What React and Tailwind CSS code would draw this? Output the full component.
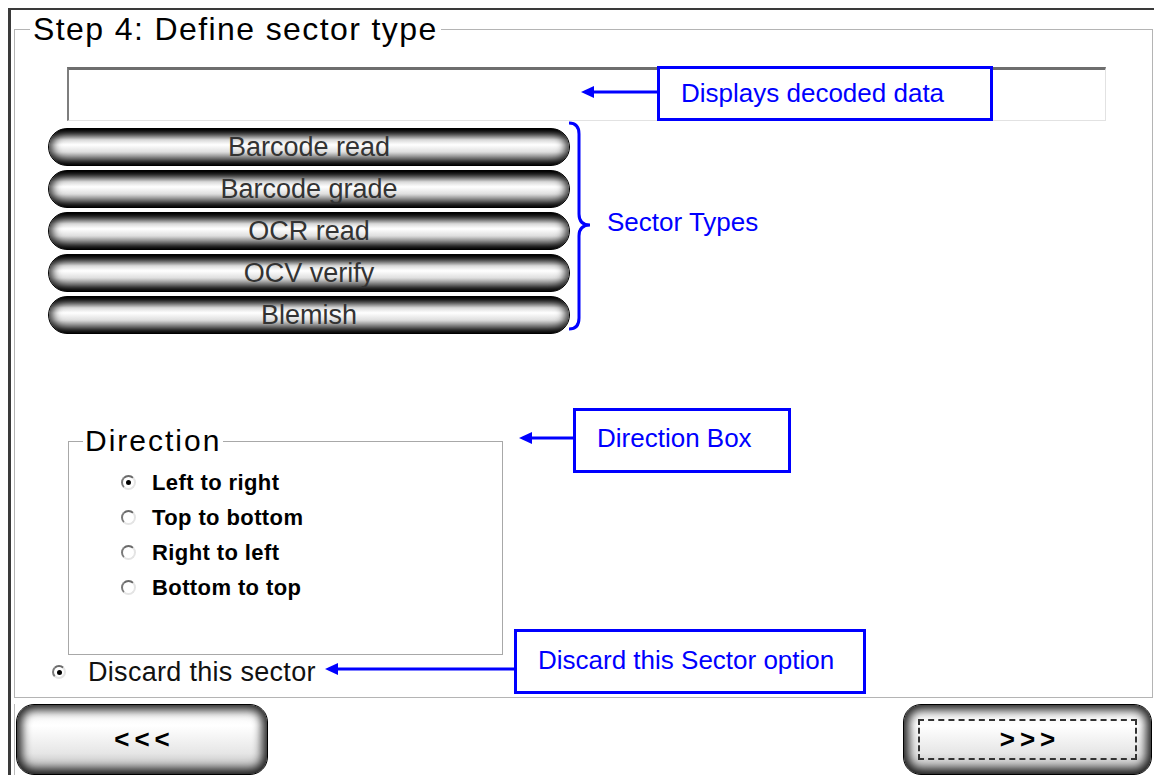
import React, { useState } from 'react';

const sectorTypes = ['Barcode read', 'Barcode grade', 'OCR read', 'OCV verify', 'Blemish'];
const directions = ['Left to right', 'Top to bottom', 'Right to left', 'Bottom to top'];

const Radio = ({ checked, size = 'w-[15px] h-[15px]' }) => (
  <span className={`${size} rounded-full bg-white border-2 border-t-[#6a6a6a] border-l-[#7a7a7a] border-r-[#e4e4e4] border-b-[#e4e4e4] flex items-center justify-center shrink-0`}>
    {checked && <span className="w-[5px] h-[5px] rounded-full bg-black" />}
  </span>
);

const Pill = ({ label }) => (
  <button className="w-[522px] h-[38px] rounded-full border border-black bg-[linear-gradient(to_bottom,#000_0%,#555_12%,#dcdcdc_30%,#fff_44%,#dedede_64%,#7a7a7a_84%,#111_100%)] shadow-[inset_0_0_8px_3px_rgba(0,0,0,0.8)] text-[27px] leading-none text-[#333] flex items-center justify-center">
    {label}
  </button>
);

const NavButton = ({ label, focused, className }) => (
  <button className={`${className} h-[71px] rounded-[18px] border border-black bg-[linear-gradient(to_bottom,#f2f2f2_0%,#ffffff_30%,#e6e6e6_70%,#b0b0b0_100%)] shadow-[inset_0_0_10px_5px_rgba(0,0,0,0.85)] flex items-stretch p-[14px]`}>
    <span className={`flex-1 flex items-center justify-center text-[26px] font-bold tracking-[5px] pl-[5px] text-black ${focused ? 'border-2 border-dashed border-[#333]' : ''}`}>
      {label}
    </span>
  </button>
);

export default function App() {
  const [direction, setDirection] = useState('Left to right');

  return (
    <div className="relative w-[1154px] h-[775px] bg-white overflow-hidden pt-[8px] pl-[8px] font-['Liberation_Sans',Arial,sans-serif]">
      <div className="h-full border-t-2 border-l-[3px] border-[#3a3a3a] pl-[3px] pt-[3px] flex flex-col">
        {/* ── Step 4 group ── */}
        <fieldset className="w-[1139px] h-[685px] border border-[#b4b4b4] shrink-0">
          <legend className="ml-[15px] px-[3px] text-[32px] leading-none tracking-[1.4px] text-black">
            Step 4: Define sector type
          </legend>

          <div className="mt-[22px] ml-[52px] w-[1039px] h-[54px] border-t-[3px] border-l-2 border-r border-b border-t-[#6e6e6e] border-l-[#7e7e7e] border-r-[#e2e2e2] border-b-[#e2e2e2] bg-white" />

          <div className="mt-[7px] ml-[33px] flex flex-col gap-[4px]">
            {sectorTypes.map(s => <Pill key={s} label={s} />)}
          </div>

          {/* Direction */}
          <fieldset className="mt-[92px] ml-[53px] w-[435px] h-[229px] border border-[#a8a8a8]">
            <legend className="ml-[14px] px-[2px] text-[30px] leading-none tracking-[2px] text-black">Direction</legend>
            <div className="mt-[9px] flex flex-col">
              {directions.map(d => (
                <label key={d} onClick={() => setDirection(d)} className="h-[35px] pl-[52px] flex items-center gap-[16px] cursor-pointer">
                  <Radio checked={direction === d} />
                  <span className="text-[22px] font-bold tracking-[0.4px] text-black">{d}</span>
                </label>
              ))}
            </div>
          </fieldset>

          <div className="mt-[2px] h-[30px] pl-[37px] flex items-center gap-[22px]">
            <Radio checked size="w-[14px] h-[14px]" />
            <span className="text-[27px] leading-none tracking-[0.3px] text-[#111]">Discard this sector</span>
          </div>
        </fieldset>

        {/* ── Nav buttons ── */}
        <div className="mt-[6px] flex-1 border-l border-[#bbb] flex justify-between items-start">
          <NavButton label="<<<" className="ml-[1px] w-[252px]" />
          <NavButton label=">>>" focused className="mr-[2px] w-[249px]" />
        </div>
      </div>

      {/* ── Annotations ── */}
      <svg className="absolute inset-0 pointer-events-none" width="1154" height="775">
        <line x1="591" y1="92" x2="657" y2="92" stroke="#0000ff" strokeWidth="3" />
        <polygon points="581,92 594,86 594,98" fill="#0000ff" />
        <line x1="530" y1="438" x2="573" y2="438" stroke="#0000ff" strokeWidth="3" />
        <polygon points="519,438 532,432 532,444" fill="#0000ff" />
        <line x1="336" y1="669" x2="514" y2="669" stroke="#0000ff" strokeWidth="3" />
        <polygon points="325,669 338,663 338,675" fill="#0000ff" />
        <path d="M569,123 Q579,123 579,134 L579,214 Q579,225 590,225 Q579,225 579,236 L579,318 Q579,329 569,329" fill="none" stroke="#0000ff" strokeWidth="3" />
      </svg>

      <div className="absolute left-[657px] top-[66px] w-[336px] h-[55px] border-[3px] border-[#0000ff] bg-white pl-[21px] flex items-center text-[26px] text-[#0000ff]">
        Displays decoded data
      </div>
      <div className="absolute left-[607px] top-[207px] text-[26px] leading-[30px] text-[#0000ff]">Sector Types</div>
      <div className="absolute left-[573px] top-[408px] w-[218px] h-[65px] border-[3px] border-[#0000ff] bg-white pl-[21px] pb-[4px] flex items-center text-[26px] text-[#0000ff]">
        Direction Box
      </div>
      <div className="absolute left-[514px] top-[629px] w-[352px] h-[65px] border-[3px] border-[#0000ff] bg-white pl-[21px] pb-[3px] flex items-center text-[26px] text-[#0000ff]">
        Discard this Sector option
      </div>
    </div>
  );
}
